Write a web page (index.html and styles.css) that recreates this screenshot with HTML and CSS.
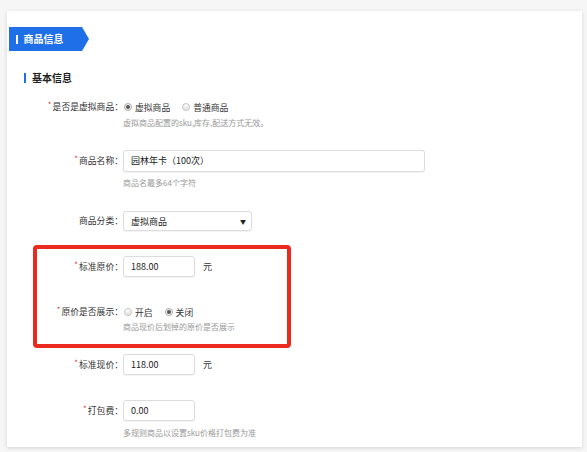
FILE: index.html
```html
<!DOCTYPE html>
<html lang="zh-CN">
<head>
<meta charset="utf-8">
<title>商品信息</title>
<link rel="stylesheet" href="styles.css">
</head>
<body>
<div class="panel">
  <div class="tab"><span class="tab-bar"></span>商品信息</div>
  <div class="section-title"><span class="title-bar"></span>基本信息</div>

  <div class="field field-radio f1">
    <div class="label"><span class="req">*</span>是否是虚拟商品：</div>
    <div class="ctrl">
      <div class="radios">
        <span class="radio checked"></span><span class="rtext">虚拟商品</span>
        <span class="radio"></span><span class="rtext">普通商品</span>
      </div>
      <div class="hint">虚拟商品配置的sku,库存,配送方式无效。</div>
    </div>
  </div>

  <div class="field field-input f2">
    <div class="label"><span class="req">*</span>商品名称：</div>
    <div class="ctrl">
      <div class="input input-wide">园林年卡（100次）</div>
      <div class="hint hint-input">商品名最多64个字符</div>
    </div>
  </div>

  <div class="field field-select f3">
    <div class="label">商品分类：</div>
    <div class="ctrl">
      <div class="select"><span>虚拟商品</span><span class="caret">▼</span></div>
    </div>
  </div>

  <div class="highlight">
    <div class="field field-input f4">
      <div class="label"><span class="req">*</span>标准原价：</div>
      <div class="ctrl">
        <div class="inline"><div class="input input-price">188.00</div><span class="unit">元</span></div>
      </div>
    </div>

    <div class="field field-radio f5">
      <div class="label"><span class="req">*</span>原价是否展示：</div>
      <div class="ctrl">
        <div class="radios">
          <span class="radio"></span><span class="rtext">开启</span>
          <span class="radio checked"></span><span class="rtext">关闭</span>
        </div>
        <div class="hint hint-tight">商品现价后划掉的原价是否展示</div>
      </div>
    </div>
  </div>

  <div class="field field-input f6">
    <div class="label"><span class="req">*</span>标准现价：</div>
    <div class="ctrl">
      <div class="inline"><div class="input input-price">118.00</div><span class="unit">元</span></div>
    </div>
  </div>

  <div class="field field-input f7">
    <div class="label"><span class="req">*</span>打包费：</div>
    <div class="ctrl">
      <div class="input input-price">0.00</div>
      <div class="hint hint-last">多规则商品以设置sku价格打包费为准</div>
    </div>
  </div>
</div>
</body>
</html>
```

FILE: styles.css
```css
*, *::before, *::after { box-sizing: border-box; }

html, body {
  margin: 0;
  padding: 0;
}

body {
  width: 587px;
  height: 452px;
  background: #f6f6f6;
  font-family: "Noto Sans CJK SC", "Liberation Sans", sans-serif;
  color: #333;
  overflow: hidden;
  padding: 11px 5px 0 7px;
}

.panel {
  width: 575px;
  background: #fff;
  box-shadow: 0 1px 4px rgba(0, 0, 0, 0.14);
  padding: 16px 0 8px 0;
  display: flex;
  flex-direction: column;
}

.tab {
  position: relative;
  width: 73px;
  height: 24px;
  margin-left: 2px;
  background: #1f6fe8;
  color: #fff;
  font-size: 10px;
  font-weight: bold;
  line-height: 24px;
  display: flex;
  align-items: center;
  padding-left: 7px;
}

.tab::after {
  content: "";
  position: absolute;
  right: -7px;
  top: 0;
  width: 7px;
  height: 24px;
  border-top: 12px solid transparent;
  border-bottom: 12px solid transparent;
  border-left: 7px solid #1f6fe8;
}

.tab-bar {
  width: 1.5px;
  height: 9px;
  background: #fff;
  margin-right: 6px;
}

.section-title {
  margin-top: 20px;
  margin-left: 17px;
  height: 14px;
  line-height: 14px;
  font-size: 10px;
  font-weight: bold;
  color: #222;
  display: flex;
  align-items: center;
}

.title-bar {
  width: 2px;
  height: 10px;
  background: #1f6fe8;
  margin-right: 6px;
}

.field {
  display: flex;
  align-items: flex-start;
}

.label {
  width: 116px;
  flex-shrink: 0;
  text-align: right;
  font-size: 8.8px;
  color: #333;
  white-space: nowrap;
}

.req {
  color: #e3393c;
  font-size: 8px;
  position: relative;
  top: -2px;
  margin-right: 1px;
}

.field-radio .label { line-height: 16px; }
.field-input .label { line-height: 22px; }
.field-select .label { line-height: 20px; }

.f4 .label, .f6 .label, .f7 .label { line-height: 21px; }

.ctrl {
  display: flex;
  flex-direction: column;
}

.f1 { margin-top: 14px; }
.f2 { margin-top: 21px; }
.f3 { margin-top: 22px; }
.highlight { margin-top: 25px; position: relative; }
.f5 { margin-top: 27px; }
.f6 { margin-top: 21px; }
.f7 { margin-top: 25px; }

.highlight::before {
  content: "";
  position: absolute;
  left: 26px;
  top: -11px;
  width: 258px;
  height: 103px;
  border: 4px solid #ea2a1e;
  border-radius: 4px;
  pointer-events: none;
}

.radios {
  height: 16px;
  display: flex;
  align-items: center;
  font-size: 8.8px;
  color: #333;
}

.radio {
  width: 8px;
  height: 8px;
  border-radius: 50%;
  border: 1px solid #c4c4c4;
  background: linear-gradient(#fdfdfd, #e2e2e2);
  flex-shrink: 0;
  margin-left: 1px;
  display: flex;
  align-items: center;
  justify-content: center;
}

.radio.checked {
  border-color: #a8a8a8;
  background: #f4f4f4;
}

.radio.checked::after {
  content: "";
  width: 4px;
  height: 4px;
  border-radius: 50%;
  background: #555;
}

.rtext {
  margin-left: 3px;
  margin-right: 11px;
}

.hint {
  font-size: 8px;
  color: #999;
  line-height: 12px;
  height: 12px;
  margin-top: 2px;
  white-space: nowrap;
}

.hint-input { margin-top: 5px; }
.hint-tight { margin-top: 1px; }
.hint-last { margin-top: 6px; }

.input {
  height: 22px;
  border: 1px solid #dcdcdc;
  border-radius: 3px;
  box-shadow: 0 1px 1px rgba(0, 0, 0, 0.05);
  background: #fff;
  font-size: 9px;
  color: #222;
  line-height: 20px;
  padding-left: 7px;
  white-space: nowrap;
}

.input-wide { width: 302px; }
.input-price { width: 72px; height: 21px; line-height: 19px; }

.inline {
  display: flex;
  align-items: center;
}

.unit {
  margin-left: 8px;
  font-size: 9px;
  color: #333;
}

.select {
  width: 129px;
  height: 20px;
  border: 1px solid #dcdcdc;
  border-radius: 3px;
  box-shadow: 0 1px 1px rgba(0, 0, 0, 0.05);
  font-size: 9px;
  color: #222;
  display: flex;
  align-items: center;
  justify-content: space-between;
  padding: 0 5px 0 7px;
}

.caret {
  font-size: 6px;
  color: #222;
}
```
